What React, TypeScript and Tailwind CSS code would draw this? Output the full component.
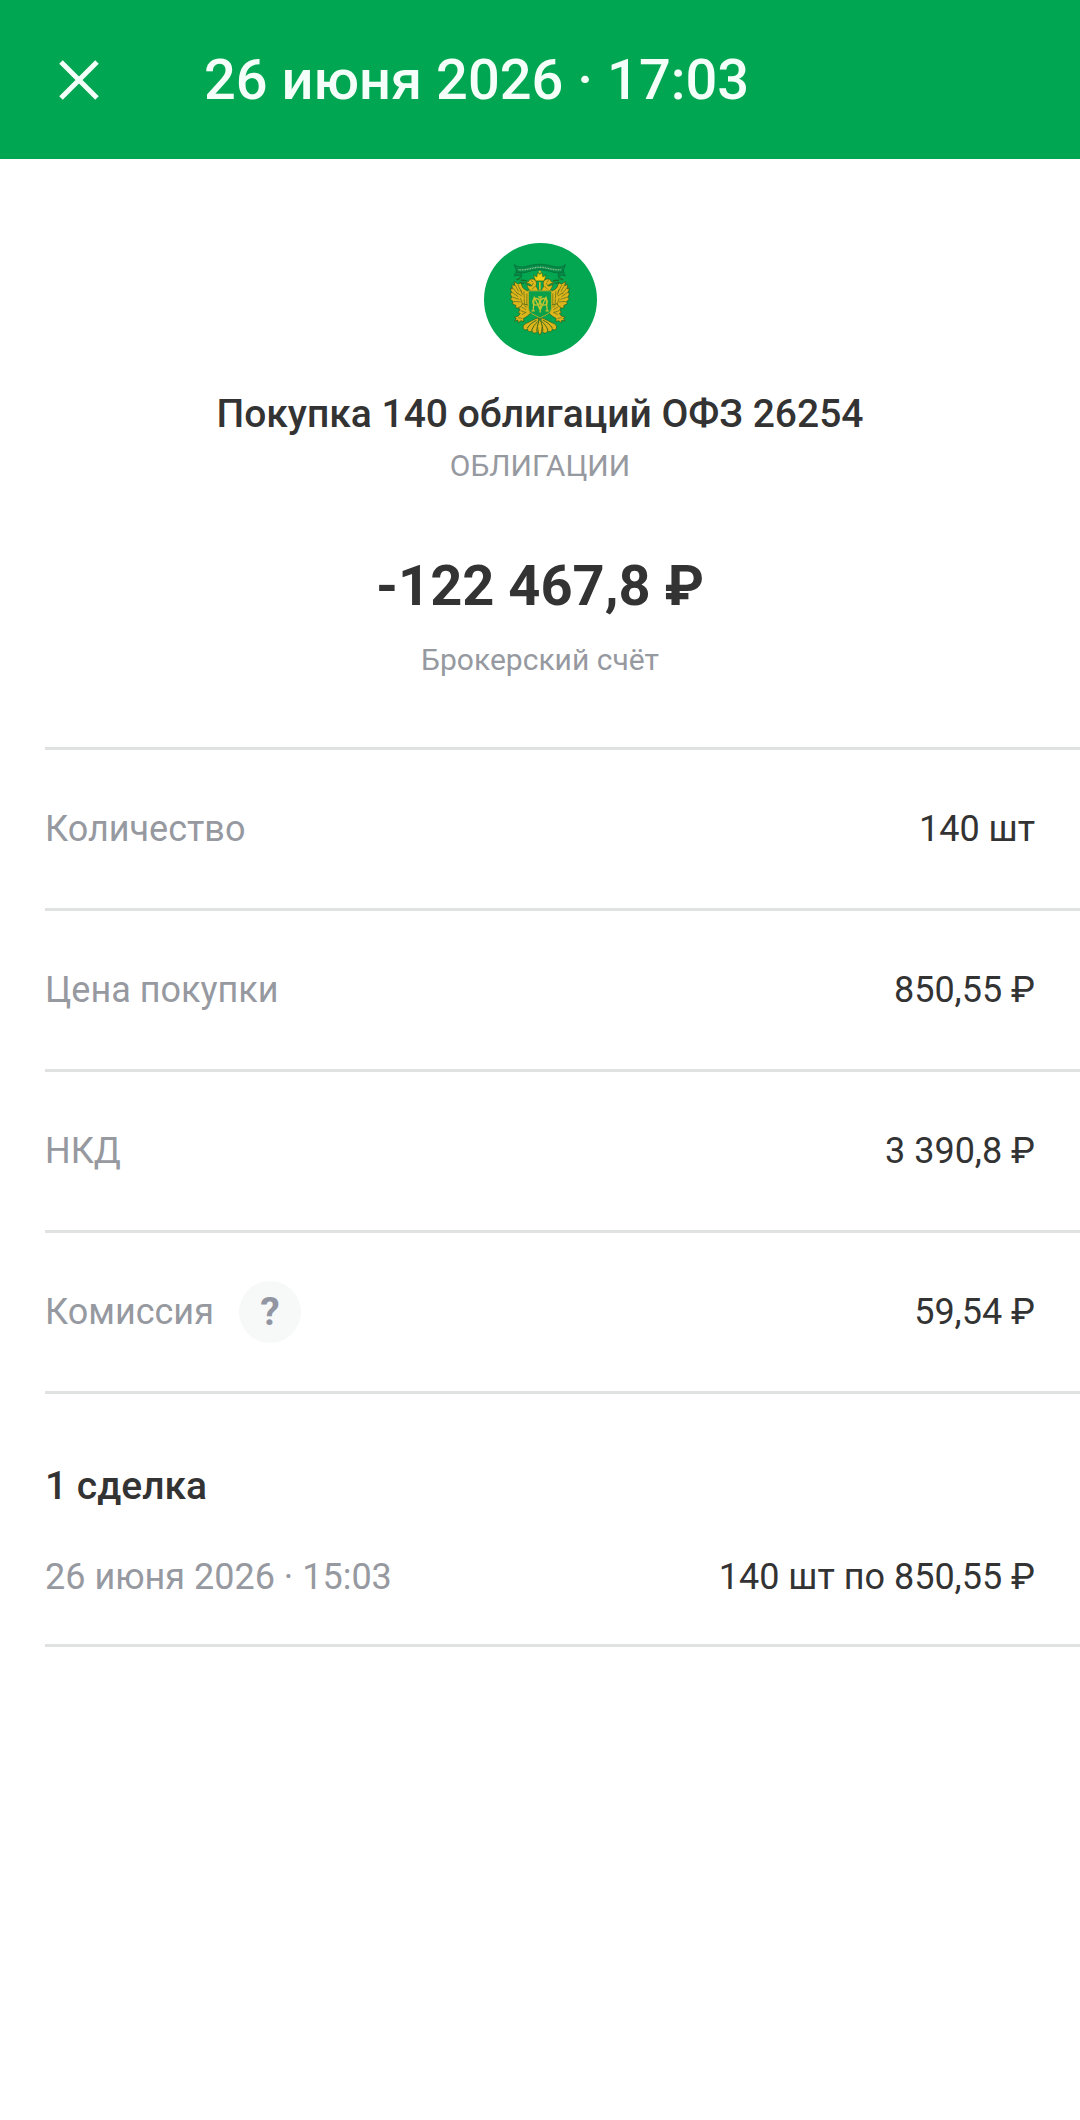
const details = [
  { label: "Количество", value: "140 шт" },
  { label: "Цена покупки", value: "850,55 ₽" },
  { label: "НКД", value: "3 390,8 ₽" },
  { label: "Комиссия", value: "59,54 ₽", hint: true },
];

function CloseIcon() {
  return (
    <svg viewBox="0 0 40 40" className="h-10 w-10" fill="none" stroke="currentColor" strokeWidth="5">
      <path d="M2 2l36 36M38 2L2 38" />
    </svg>
  );
}

/** One half of the eagle, the other one is mirrored. */
function EagleHalf() {
  return (
    <g strokeLinejoin="round" strokeLinecap="round">
      {/* wing */}
      <path
        d="M178 184c-8-1-16-6-20-12l-5-14-8 5-12-8 1 12-8-3 1 13-6-2 4 14-5 1 6 13-5 4 9 9-3 6 11 5-1 7 12 2 4 6 8-3 4 8 13-2z"
        fill="#dcb41c"
        stroke="#2c5a1c"
        strokeWidth="2"
      />
      <path
        d="M132 160l14 24M127 172l16 20M126 187l18 13M128 202l19 6M133 215l18 1M145 167l10 20M153 180l4 14M162 186l1 18M152 206l7 20M163 208l2 24M171 192v44M143 190l12 8"
        fill="none"
        stroke="#55691a"
        strokeWidth="2"
      />
      {/* neck and head */}
      <path
        d="M205 184c-1-8-4-10-7-15 4-8 2-18-7-21-9-3-14 2-15 7l-10 4 10 2c5 2 8 3 9 7-4 1-9-1-14-5 1 10 6 18 13 21z"
        fill="#dfb91b"
        stroke="#2c5a1c"
        strokeWidth="2"
      />
      <path d="M184 153l4 2M190 160l-4 8M195 170l-8 8" fill="none" stroke="#4b6417" strokeWidth="2" />
      {/* leg */}
      <path
        d="M175 226l-17-4-5 8-7 3 4 7-5 8 6 3-6 8-11 3 5 4-5 8 10-3 1 8 8-6 9 2-1-9 12-7 8-8z"
        fill="#dcb41c"
        stroke="#2c5a1c"
        strokeWidth="2"
      />
      <path d="M156 232l12 7M153 243l15 5M157 254l10-6M146 264l10 2M164 228l7 4" fill="none" stroke="#55691a" strokeWidth="2" />
      {/* tail feathers */}
      <path
        d="M205 264c-14 4-24 12-34 16-8 3-13 8-11 15 2 7 9 7 13 2-1 8 7 12 14 5 0 8 9 12 15 3l6 6z"
        fill="#dcb41c"
        stroke="#2c5a1c"
        strokeWidth="2"
      />
      <path d="M199 272c-10 5-20 12-26 22M203 276c-8 7-13 15-17 24M206 279c-3 9-5 15-5 24" fill="none" stroke="#3c6a1a" strokeWidth="3" />
      {/* ribbon end */}
      <path d="M140 122l-7 16 12-2 10 6-1-13z" fill="#078a48" stroke="#066b35" strokeWidth="2" />
      <path d="M141 149l10-4M154 151l15 1M150 158l12 2" fill="none" stroke="#1b6c26" strokeWidth="4" />
    </g>
  );
}

/** Round issuer badge with the double-headed eagle. */
function IssuerLogo() {
  return (
    <svg viewBox="42 39 340 340" className="h-[113px] w-[113px]" role="img" aria-label="ОФЗ">
      <circle cx="212" cy="209" r="170" fill="#03a651" />
      <EagleHalf />
      <g transform="translate(420 0) scale(-1 1)">
        <EagleHalf />
      </g>
      {/* ribbon */}
      <path
        d="M133 104c8 7 20 9 34 6 14-4 28-7 43-7s29 3 43 7c14 3 26 1 34-6l-8 23c-14 4-26 1-36-2-11-4-22-5-33-5s-22 1-33 5c-10 3-22 6-36 2z"
        fill="#078a48"
        stroke="#066b35"
        strokeWidth="2"
      />
      <path d="M146 119c22 4 43-7 64-7s42 11 64 7" fill="none" stroke="#8cc98a" strokeWidth="4" strokeDasharray="3 2" />
      {/* crown */}
      <path d="M197 153l-6-18 10 6 2-13 7 5 7-5 2 13 10-6-6 18z" fill="#f2cf12" stroke="#3c6a1a" strokeWidth="2" />
      <path d="M210 122v8M206 126h8" stroke="#e8c41a" strokeWidth="3" />
      <path d="M210 156v24" stroke="#d9b31c" strokeWidth="5" />
      {/* middle feather */}
      <path d="M210 264l7 26-3 20-4 6-4-6-3-20z" fill="#e0ba1b" stroke="#2c5a1c" strokeWidth="2" />
      {/* shield with monogram */}
      <path d="M176 183h69v51c0 18-18 20-34 31-17-11-35-13-35-31z" fill="#09a04c" stroke="#b5aa25" strokeWidth="3" />
      <g fill="none" stroke="#c4c52d" strokeWidth="4">
        <circle cx="199" cy="216" r="10" />
        <circle cx="222" cy="216" r="10" />
        <path d="M190 243l3-42 18 40 18-40 3 42M211 201v47M185 243h10M227 243h10M205 201h12" />
      </g>
    </svg>
  );
}

export default function App() {
  return (
    <div className="min-h-screen bg-white font-['Roboto','Noto_Sans',sans-serif] text-[#333333]">
      <header className="flex h-[159px] items-center bg-[#00a651] pl-[59px] text-[#f5fff9]">
        <button type="button" aria-label="Закрыть">
          <CloseIcon />
        </button>
        <h1 className="ml-[105px] text-[56px] leading-16 font-medium">26 июня 2026 · 17:03</h1>
      </header>

      <main className="pt-[84px]">
        <section className="flex flex-col items-center text-center">
          <IssuerLogo />
          <h2 className="mt-[34px] text-[39px] leading-12 font-medium">Покупка 140 облигаций ОФЗ 26254</h2>
          <p className="mt-2 text-[30px] leading-10 text-[#96999f]">ОБЛИГАЦИИ</p>
          <p className="mt-[68px] text-[56px] leading-16 font-bold">-122 467,8 ₽</p>
          <p className="mt-[22px] text-[30px] leading-10 text-[#96999f]">Брокерский счёт</p>
        </section>

        <dl className="mt-[67px] ml-[45px] border-t-3 border-[#e0e2e2] text-[36px] leading-12">
          {details.map(({ label, value, hint }) => (
            <div
              key={label}
              className="flex h-[161px] items-center justify-between border-b-3 border-[#e0e2e2] pr-[45px]"
            >
              <dt className="flex items-center text-[#96999f]">
                {label}
                {hint ? (
                  <button
                    type="button"
                    aria-label="Подробнее о комиссии"
                    className="ml-[25px] flex h-[62px] w-[62px] items-center justify-center rounded-full bg-[#f7f9f9] text-[39px] font-bold text-[#9296a2]"
                  >
                    ?
                  </button>
                ) : null}
              </dt>
              <dd>{value}</dd>
            </div>
          ))}
        </dl>

        <section className="ml-[45px] border-b-3 border-[#e0e2e2] pt-[68px] pr-[45px] pb-[43px]">
          <h3 className="text-[39px] leading-12 font-medium">1 сделка</h3>
          <div className="mt-[43px] flex items-center justify-between text-[36px] leading-12">
            <time className="text-[#96999f]">26 июня 2026 · 15:03</time>
            <span>140 шт по 850,55 ₽</span>
          </div>
        </section>
      </main>
    </div>
  );
}
